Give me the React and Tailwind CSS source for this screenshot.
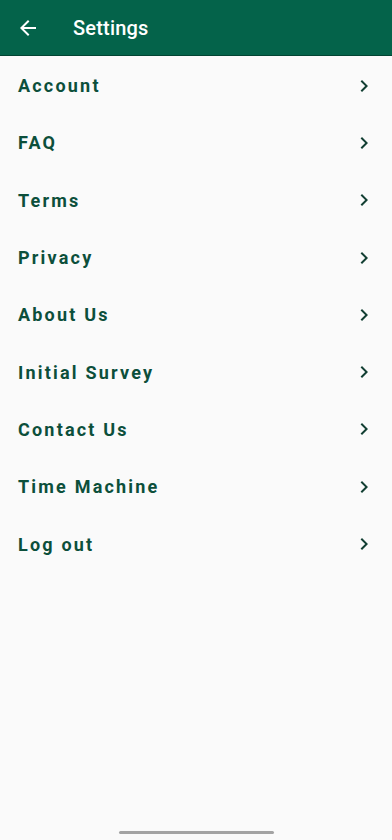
import React from 'react';

const items = [
  'Account',
  'FAQ',
  'Terms',
  'Privacy',
  'About Us',
  'Initial Survey',
  'Contact Us',
  'Time Machine',
  'Log out',
];

function Chevron() {
  return (
    <svg viewBox="0 0 24 24" className="w-6 h-6" fill="#123f33">
      <path d="M10 6L8.59 7.41 13.17 12l-4.58 4.59L10 18l6-6z" />
    </svg>
  );
}

export default function App() {
  return (
    <div className="w-[392px] h-[840px] bg-[#fafafa] flex flex-col font-['Roboto',sans-serif]">
      <header className="h-14 bg-[#04634a] border-b border-[#024433] flex items-center px-4 gap-[33px] shrink-0">
        <svg viewBox="0 0 24 24" className="w-6 h-6" fill="#ffffff">
          <path d="M20 11H7.83l5.59-5.59L12 4l-8 8 8 8 1.41-1.41L7.83 13H20v-2z" />
        </svg>
        <h1 className="text-white text-[20px] font-medium tracking-[0.2px]">Settings</h1>
      </header>

      <ul className="flex flex-col pt-[1px]">
        {items.map((label) => (
          <li key={label} className="h-[57.3px] flex items-center justify-between pl-[18px] pr-[16px]">
            <span className="text-[18px] font-bold tracking-[2.2px] text-[#0c4f3b]">{label}</span>
            <Chevron />
          </li>
        ))}
      </ul>

      <div className="flex-1" />
      <div className="flex justify-center pb-[6px]">
        <div className="w-[155px] h-[3px] rounded-full bg-[#a3a3a3]" />
      </div>
    </div>
  );
}
